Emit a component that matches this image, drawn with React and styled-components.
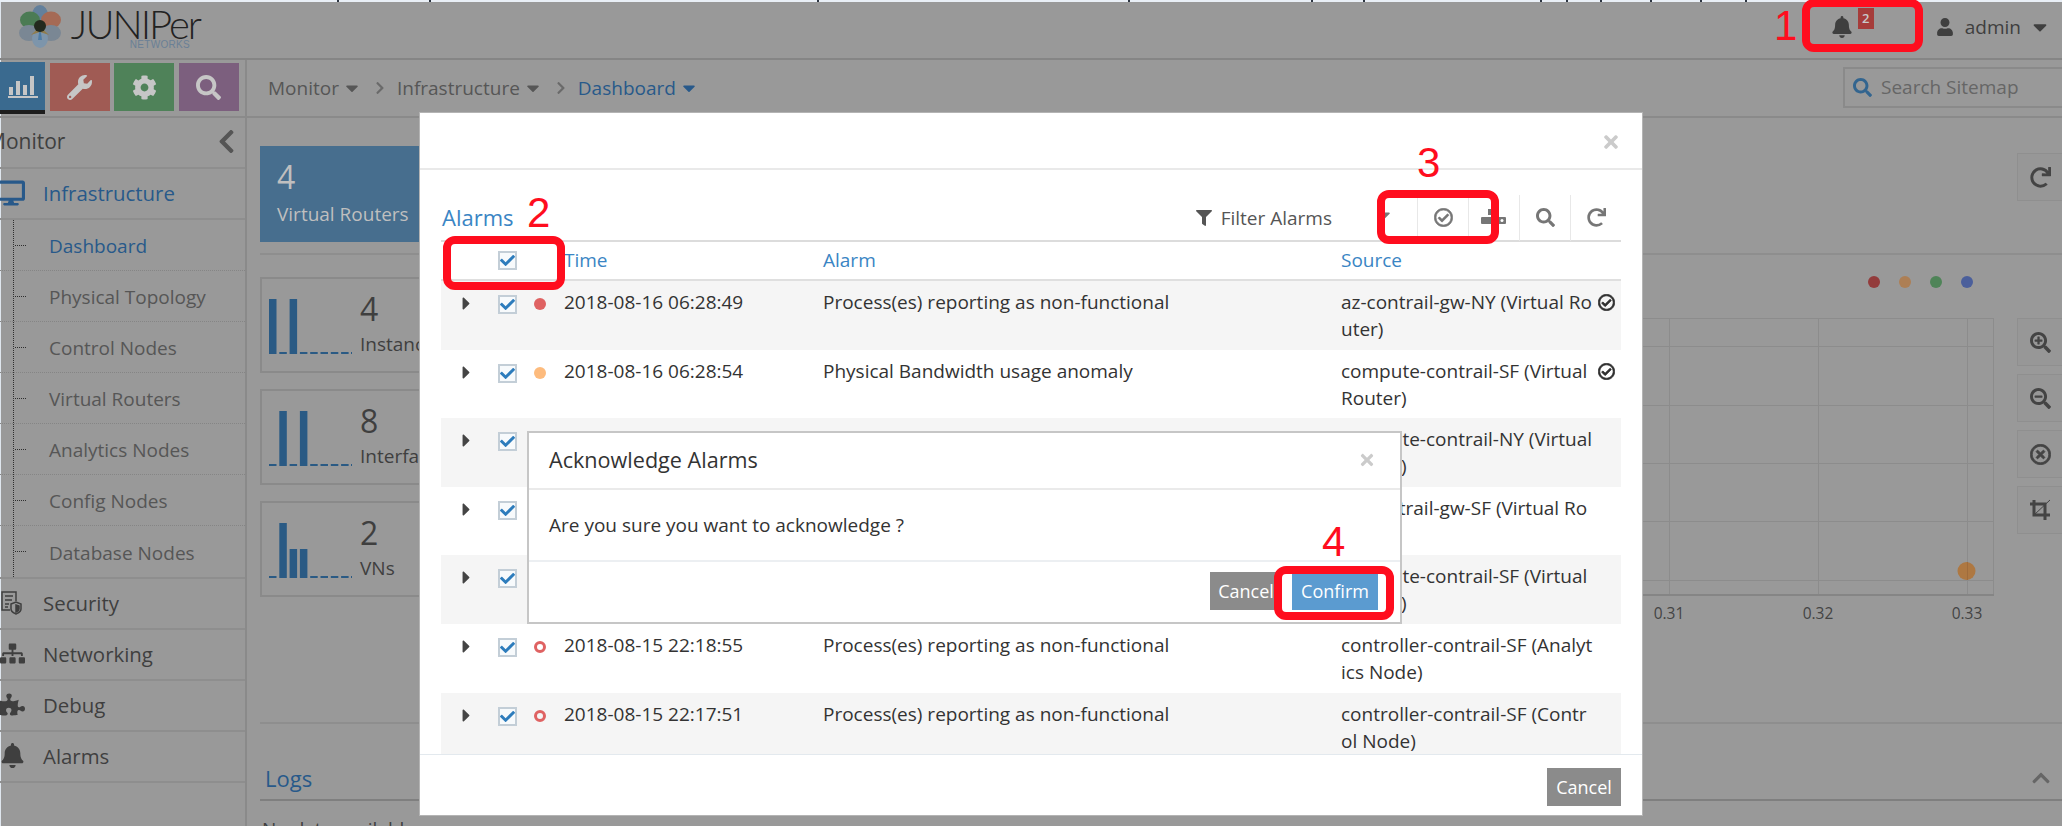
import React from 'react'
import styled, { createGlobalStyle } from 'styled-components'
import {
    FaBell,
    FaCaretDown,
    FaCaretRight,
    FaChevronLeft,
    FaChevronRight,
    FaChevronUp,
    FaCheck,
    FaCog,
    FaDesktop,
    FaFilter,
    FaPuzzlePiece,
    FaRedo,
    FaRegCheckCircle,
    FaRegTimesCircle,
    FaSearch,
    FaSearchMinus,
    FaSearchPlus,
    FaSitemap,
    FaTimes,
    FaUser,
    FaWrench
} from 'react-icons/fa'

// the page sits behind a modal backdrop, so these are the dimmed colours
const dimBg = '#999999'
const dimLine = '#8a8a8a'
const dimText = '#3f3f3f'
const dimMuted = '#565656'
const dimBlue = '#28598a'
const linkBlue = '#3a85c4'
const annotation = '#ff0d1e'

const GlobalStyle = createGlobalStyle`
    html, body {
        margin: 0;
        height: 826px;
        overflow: hidden;
        background: ${dimBg};
        font-family: "Open Sans", "Liberation Sans", sans-serif;
        font-size: 19px;
    }
    * { box-sizing: border-box; }
`

const Page = styled.div`
    position: relative;
    width: 2062px;
    height: 826px;
    overflow: hidden;
    color: ${dimText};
    box-shadow: inset 1px 0 #dfe6ee;
`

const TopStrip = styled.svg`
    display: block;
    width: 100%;
    height: 2px;
    background: #e9eff6;
`

const Header = styled.header`
    display: flex;
    align-items: center;
    justify-content: space-between;
    height: 58px;
    padding: 0 11px 6px 19px;
    border-bottom: 2px solid #858585;
`

const Logo = styled.div`
    display: flex;
    align-items: flex-start;
    gap: 11px;
`

const LogoWords = styled.div`
    display: flex;
    flex-direction: column;
    align-items: flex-end;
    width: 128px;
`

const LogoName = styled.span`
    font-family: Lato, "Open Sans", sans-serif;
    font-weight: 300;
    font-size: 40px;
    line-height: 40px;
    letter-spacing: -2px;
    color: #222;
`

const LogoSub = styled.span`
    font-family: "Liberation Sans", sans-serif;
    font-size: 10px;
    line-height: 10px;
    letter-spacing: 0.3px;
    margin: -4px 10px 0 0;
    color: #6a8096;
`

const UserBar = styled.div`
    display: flex;
    align-items: center;
`

const BellLink = styled.span`
    position: relative;
    display: flex;
    margin-right: 83px;
    font-size: 22px;
`

const BellBadge = styled.span`
    position: absolute;
    left: 27px;
    top: -8px;
    width: 16px;
    height: 21px;
    background: #a63c3a;
    color: #c9c9c9;
    font-size: 13px;
    font-weight: 600;
    line-height: 21px;
    text-align: center;
`

const UserName = styled.span`
    margin: 0 8px 0 11px;
`

const Body = styled.div`
    display: flex;
    height: 766px;
`

const Sidebar = styled.aside`
    flex: 0 0 247px;
    overflow: hidden;
    border-right: 2px solid ${dimLine};
`

const TabRow = styled.div`
    display: flex;
    gap: 4.5px;
    height: 58px;
    padding-top: 3px;
    border-bottom: 2px solid ${dimLine};
`

const Tab = styled.div`
    display: flex;
    align-items: center;
    justify-content: center;
    flex: 0 0 ${(p) => (p.$active ? '45px' : '60px')};
    height: ${(p) => (p.$active ? '52px' : '48px')};
    margin-top: ${(p) => (p.$active ? '-1px' : '0')};
    background: ${(p) => p.$color};
    border-bottom: ${(p) => (p.$active ? '4px solid #1d1d1d' : '0')};
    color: #c6c6c6;
    font-size: 25px;
`

const SideTitle = styled.div`
    display: flex;
    align-items: center;
    justify-content: space-between;
    height: 51px;
    padding: 0 5px 3px 0;
    border-bottom: 2px solid #8e8e8e;
    font-size: 21px;
    color: ${dimText};
`

const SideTitleText = styled.span`
    margin-left: -13px;
`

const SideChevron = styled.span`
    display: flex;
    color: #555;
    font-size: 27px;
`

const SideRow = styled.div`
    display: flex;
    align-items: center;
    height: 51px;
    padding-bottom: 2px;
    border-bottom: 2px solid #8e8e8e;
    font-size: 20.4px;
    color: ${(p) => (p.$active ? dimBlue : dimText)};
`

const SideIcon = styled.span`
    display: flex;
    flex: 0 0 ${(p) => 43 - (p.$shift || 0)}px;
    font-size: ${(p) => p.$size || 25}px;
    margin-left: ${(p) => p.$shift || 0}px;
`

const SubList = styled.div`
    position: relative;
    border-bottom: 2px solid #8e8e8e;

    &::before {
        content: '';
        position: absolute;
        left: 13px;
        top: 0;
        bottom: 0;
        border-left: 1px dotted #2e2e2e;
    }
`

const SubRow = styled.div`
    position: relative;
    display: flex;
    align-items: center;
    height: 51px;
    padding: 2px 0 0 49px;
    border-bottom: ${(p) => (p.$last ? '0' : '1px dotted #858585')};
    color: ${(p) => (p.$active ? dimBlue : dimMuted)};

    &::before {
        content: '';
        position: absolute;
        left: 15px;
        top: 25px;
        width: 11px;
        border-top: 1px dotted #2e2e2e;
    }
`

const Main = styled.main`
    flex: 1;
    min-width: 0;
`

const SubNav = styled.nav`
    display: flex;
    align-items: center;
    justify-content: space-between;
    height: 58px;
    padding-left: 21px;
    border-bottom: 2px solid ${dimLine};
    color: ${dimMuted};
`

const Crumbs = styled.div`
    display: flex;
    align-items: center;
`

const Crumb = styled.span`
    display: flex;
    align-items: center;
    gap: 3px;
    color: ${(p) => (p.$active ? dimBlue : dimMuted)};
`

const CrumbSep = styled.span`
    display: flex;
    margin: 0 10px 0 11px;
    font-size: 14px;
    color: #6a6a6a;
`

const SearchBox = styled.div`
    display: flex;
    align-items: center;
    gap: 9px;
    width: 219px;
    height: 41px;
    margin-top: -2px;
    padding-left: 8px;
    border: 2px solid ${dimLine};
    border-right: 0;
    color: #666;
`

const SearchIcon = styled.span`
    display: flex;
    color: #33658f;
`

const Content = styled.div`
    padding: 28px 0 0 13px;
`

const SummaryRow = styled.div`
    display: flex;
    justify-content: space-between;
    height: 109px;
    border-bottom: 2px solid #8e8e8e;
`

const HeroCard = styled.div`
    width: 260px;
    height: 96px;
    padding: 9px 17px;
    background: #476e8e;
    color: #bfbfbf;
`

const HeroValue = styled.div`
    font-size: 32px;
    line-height: 44px;
`

const HeroLabel = styled.div`
    line-height: 30px;
`

const ToolButton = styled.div`
    display: flex;
    align-items: center;
    justify-content: center;
    width: 45px;
    height: 48px;
    margin-top: ${(p) => p.$top || 0}px;
    border: 1px solid #8f8f8f;
    border-right: 0;
    background: #979797;
    font-size: 21px;
    color: #444;
`

const DashRow = styled.div`
    display: flex;
    height: 469px;
    padding-top: 22px;
    border-bottom: 2px solid #8e8e8e;
`

const StatColumn = styled.div`
    display: flex;
    flex-direction: column;
    gap: 16px;
    flex: 0 0 320px;
`

const StatCard = styled.div`
    display: flex;
    height: 96px;
    border: 2px solid ${dimLine};
    padding: 19px 0 0 7px;
`

const StatText = styled.div`
    margin-left: 1px;
`

const StatValue = styled.div`
    font-size: 32px;
    line-height: 36px;
    margin-top: -7px;
`

const StatLabel = styled.div`
    line-height: 30px;
    margin-top: 2px;
`

const ChartColumn = styled.div`
    flex: 1;
    min-width: 0;
`

const Legend = styled.div`
    display: flex;
    justify-content: flex-end;
    gap: 19px;
    padding: 0 21px 30px 0;
    margin-top: -1px;
`

const LegendDot = styled.span`
    width: 12px;
    height: 12px;
    border-radius: 50%;
    background: ${(p) => p.$color};
`

const ChartSvg = styled.svg`
    display: block;
    margin-left: auto;
`

const ChartLabel = styled.text`
    font-family: "Open Sans", sans-serif;
    font-size: 15.5px;
    fill: #444;
    text-anchor: middle;
`

const ToolColumn = styled.div`
    display: flex;
    flex-direction: column;
    gap: 8px;
    flex: 0 0 45px;
    margin: 41px 0 0 23px;
`

const LogsHeader = styled.div`
    display: flex;
    align-items: center;
    justify-content: space-between;
    height: 77px;
    padding: 33px 11px 0 5px;
    border-bottom: 2px solid #7f7f7f;
`

const LogsTitle = styled.span`
    font-size: 22px;
    color: ${dimBlue};
`

const LogsChevron = styled.span`
    display: flex;
    font-size: 20px;
    color: #666;
`

const NoData = styled.div`
    margin: 15px 0 0 2px;
`

const Modal = styled.section`
    position: absolute;
    left: 419px;
    top: 112px;
    width: 1224px;
    height: 704px;
    display: flex;
    flex-direction: column;
    background: #fff;
    border: 1px solid #b4b4b4;
    color: #333;
`

const ModalHeader = styled.div`
    display: flex;
    align-items: center;
    justify-content: flex-end;
    flex: 0 0 57px;
    padding: 2px 21px 0 0;
    border-bottom: 2px solid #e9e9e9;
`

const CloseIcon = styled.span`
    display: flex;
    font-size: ${(p) => p.$size || 20}px;
    color: #cbcbcb;
`

const ModalBody = styled.div`
    flex: 1;
    min-height: 0;
    overflow: hidden;
    padding: 20px 21px 0;
`

const Toolbar = styled.div`
    display: flex;
    align-items: center;
    height: 52px;
    padding-top: 5px;
    border-bottom: 2px solid #dcdcdc;
`

const ToolbarTitle = styled.span`
    flex: 1;
    margin: -2px 0 0 1px;
    font-size: 22px;
    color: ${linkBlue};
`

const FilterLabel = styled.span`
    display: flex;
    align-items: center;
    gap: 9px;
    margin-right: 34px;
    color: #555;
    font-size: 19px;
`

const ToolbarButton = styled.span`
    display: flex;
    align-items: center;
    justify-content: center;
    width: 51px;
    height: 46px;
    padding: ${(p) => (p.$bare ? '0 16px 6px 0' : '0')};
    border-left: ${(p) => (p.$bare ? '0' : '1px solid #e8e8e8')};
    color: #767676;
    font-size: 19px;

    svg {
        stroke: currentColor;
        stroke-width: ${(p) => (p.$heavy ? 18 : 0)};
    }
`

const GridRow = styled.div`
    display: grid;
    grid-template-columns: 57px 36px 30px 259px 518px 280px;
    height: ${(p) => (p.$head ? '39px' : '68.6px')};
    align-items: ${(p) => (p.$head ? 'center' : 'start')};
    padding-top: ${(p) => (p.$head ? '0' : '8px')};
    line-height: 27px;
    font-size: 19px;
    background: ${(p) => (p.$alt ? '#f5f5f5' : '#fff')};
    border-bottom: ${(p) => (p.$head ? '2px solid #dfdfdf' : '0')};
`

const HeadCell = styled.span`
    color: ${linkBlue};
`

const CaretCell = styled.span`
    display: flex;
    padding: 4px 0 0 15px;
    font-size: 21px;
    color: #444;
`

const Check = styled.span`
    display: flex;
    align-items: center;
    justify-content: center;
    width: 19px;
    height: 19px;
    margin-top: ${(p) => (p.$head ? '0' : '6px')};
    background: #f7fafc;
    border: 2px solid #c3ced7;
    color: #2d7cbc;
    font-size: 15px;
`

const Severity = styled.span`
    display: block;
    width: 12px;
    height: 12px;
    margin-top: 9px;
    border-radius: 50%;
    background: ${(p) => (p.$hollow ? 'transparent' : p.$color)};
    border: ${(p) => (p.$hollow ? `3px solid ${p.$color}` : '0')};
`

const SourceCell = styled.div`
    display: flex;
    gap: 3px;
`

const SourceText = styled.span`
    flex: 0 0 254px;
    word-break: break-all;
`

const AckIcon = styled.span`
    display: flex;
    padding-top: 5px;
    font-size: 17px;
    color: #2f2f2f;

    svg {
        stroke: currentColor;
        stroke-width: 22;
    }
`

const ModalFooter = styled.div`
    display: flex;
    justify-content: flex-end;
    flex: 0 0 61px;
    padding: 13px 21px 0 0;
    border-top: 1px solid #e3e9ee;
`

const GreyButton = styled.span`
    display: flex;
    align-items: center;
    justify-content: center;
    width: ${(p) => p.$width}px;
    height: 38px;
    background: #8b8b8b;
    color: #fff;
    font-size: 18px;
`

const Dialog = styled.section`
    position: absolute;
    left: 527px;
    top: 431px;
    width: 875px;
    height: 193px;
    display: flex;
    flex-direction: column;
    background: #fff;
    border: 2px solid #c6c6c6;
    color: #333;
`

const DialogHeader = styled.div`
    display: flex;
    align-items: center;
    justify-content: space-between;
    flex: 0 0 57px;
    padding: 0 24px 2px 20px;
    border-bottom: 2px solid #eaeaea;
    font-size: 21.6px;
`

const DialogBody = styled.div`
    display: flex;
    align-items: center;
    flex: 0 0 72px;
    padding-left: 20px;
    border-bottom: 2px solid #eceff2;
`

const DialogFooter = styled.div`
    display: flex;
    justify-content: flex-end;
    gap: 10px;
    padding: 10px 22px 0 0;
`

const ConfirmButton = styled(GreyButton)`
    background: #5b9bd0;
`

const ZoomIcon = styled.span`
    display: flex;

    svg {
        stroke: currentColor;
        stroke-width: 20;
    }
`

const Callout = styled.div`
    position: absolute;
    left: ${(p) => p.$x}px;
    top: ${(p) => p.$y}px;
    width: ${(p) => p.$w}px;
    height: ${(p) => p.$h}px;
    border: 8px solid ${annotation};
    border-radius: 12px;
`

const CalloutNumber = styled.span`
    position: absolute;
    left: ${(p) => p.$x}px;
    top: ${(p) => p.$y}px;
    font-family: "Liberation Sans", Arial, sans-serif;
    font-size: 42px;
    line-height: 48px;
    color: ${annotation};
`

const subItems = ['Dashboard', 'Physical Topology', 'Control Nodes', 'Virtual Routers', 'Analytics Nodes', 'Config Nodes', 'Database Nodes']

const stats = [
    { value: 4, label: 'Instances', bars: [55, 2, 55, 2, 2, 2, 2, 2] },
    { value: 8, label: 'Interfaces', bars: [2, 55, 2, 55, 2, 2, 2, 2] },
    { value: 2, label: 'VNs', bars: [2, 55, 29, 29, 2, 2, 2, 2] }
]

const rows = [
    { time: '2018-08-16 06:28:49', alarm: 'Process(es) reporting as non-functional', source: 'az-contrail-gw-NY (Virtual Router)', color: '#df6262', ack: true },
    { time: '2018-08-16 06:28:54', alarm: 'Physical Bandwidth usage anomaly', source: 'compute-contrail-SF (Virtual Router)', color: '#fdbb7d', ack: true },
    { time: '2018-08-16 06:28:54', alarm: 'Physical Bandwidth usage anomaly', source: 'compute-contrail-NY (Virtual Router)', color: '#fdbb7d' },
    { time: '2018-08-16 06:28:49', alarm: 'Process(es) reporting as non-functional', source: 'az-contrail-gw-SF (Virtual Router)', color: '#df6262' },
    { time: '2018-08-15 22:19:02', alarm: 'Process(es) reporting as non-functional', source: 'compute-contrail-SF (Virtual Router)', color: '#df6262' },
    { time: '2018-08-15 22:18:55', alarm: 'Process(es) reporting as non-functional', source: 'controller-contrail-SF (Analytics Node)', color: '#df6262', hollow: true },
    { time: '2018-08-15 22:17:51', alarm: 'Process(es) reporting as non-functional', source: 'controller-contrail-SF (Control Node)', color: '#df6262', hollow: true }
]

const BarsIcon = () => (
    <svg width="30" height="24" viewBox="0 0 30 24" fill="currentColor">
        <rect x="1" y="13" width="4" height="8" />
        <rect x="8" y="7" width="4" height="14" />
        <rect x="15" y="11" width="4" height="10" />
        <rect x="22" y="2" width="4" height="19" />
        <rect x="0" y="22" width="30" height="2" />
    </svg>
)

const SecurityIcon = () => (
    <svg width="22" height="24" viewBox="0 0 22 24" fill="none" stroke="currentColor" strokeWidth="1.5">
        <path d="M10 19H2V1h14v9" />
        <path d="M5 5h8M5 9h7M5 13h4M5 16h3" />
        <path d="M11 13l5-2 5 2v5c0 3-3 4-5 5-2-1-5-2-5-5z" />
        <path d="M16 14l3 1v3c0 2-2 2.500-3 3z" fill="currentColor" />
    </svg>
)

const CropIcon = () => (
    <svg width="22" height="22" viewBox="0 0 22 22" fill="none" stroke="currentColor">
        <path d="M1 5h15v16M5 1v15h16" strokeWidth="3" />
        <path d="M5 16L21 1" strokeWidth="1" />
    </svg>
)

const FlowerLogo = () => (
    <svg width="42" height="44" viewBox="0 0 42 44">
        <ellipse cx="21" cy="11" rx="8" ry="10" fill="#63809c" />
        <ellipse cx="11" cy="16" rx="10" ry="8.500" fill="#4b7b54" />
        <ellipse cx="32" cy="16" rx="10" ry="8.500" fill="#a56a55" />
        <ellipse cx="10" cy="29" rx="10" ry="8" fill="#7a8794" />
        <ellipse cx="32" cy="29" rx="10" ry="8" fill="#7a8794" />
        <ellipse cx="21" cy="34" rx="8" ry="10" fill="#7d95ab" />
        <path d="M12 31l9-9 9 9-9-3z" fill="#8f7c4e" />
        <path d="M21 22l-2 14h4z" fill="#4f7da6" />
        <circle cx="21" cy="22" r="6" fill="#242a1e" />
    </svg>
)

const HiddenToolIcon = () => (
    <svg width="26" height="22" viewBox="0 0 26 22" fill="currentColor">
        <rect x="7" y="2" width="9" height="6" />
        <rect x="0" y="10" width="25" height="7" rx="1" />
        <circle cx="21" cy="13.500" r="1.500" fill="#fff" />
    </svg>
)

const Sparkline = ({ bars }) => (
    <svg width="90" height="56" viewBox="0 0 90 56" fill="#2a5a84">
        {bars.map((h, i) => (
            <rect key={i} x={i * 10.3} y={56 - h} width="7.500" height={h} />
        ))}
        <rect x="82" y="54" width="1" height="2" />
    </svg>
)

const Chart = () => (
    <ChartSvg width="400" height="310" viewBox="0 0 400 310">
        <g stroke="#8c8c8c" strokeWidth="1">
            {[0.5, 28.5, 87.5, 145.5, 203.5, 262.5].map((y) => (
                <line key={y} x1="0" x2="400" y1={y} y2={y} />
            ))}
            {[75.5, 224.5, 373.5, 399.5].map((x) => (
                <line key={x} x1={x} x2={x} y1="0" y2="277" />
            ))}
            <line x1="0" x2="400" y1="277" y2="277" stroke="#858585" strokeWidth="2" />
        </g>
        <circle cx="372.500" cy="253" r="9" fill="#ae7842" />
        <line x1="373.500" x2="373.500" y1="244" y2="262" stroke="#9f6c3c" />
        <ChartLabel x="75" y="301">0.31</ChartLabel>
        <ChartLabel x="224" y="301">0.32</ChartLabel>
        <ChartLabel x="373" y="301">0.33</ChartLabel>
    </ChartSvg>
)

const App = () => (
    <Page>
        <GlobalStyle />
        <TopStrip viewBox="0 0 2062 2" preserveAspectRatio="none">
            {[337, 429, 817, 1128, 1311, 1363, 1540, 1566, 1600, 1650, 1700, 1745].map((x) => (
                <rect key={x} x={x} y="0" width="2" height="2" fill="#2c3440" />
            ))}
        </TopStrip>
        <Header>
            <Logo>
                <FlowerLogo />
                <LogoWords>
                    <LogoName>JUNIPer</LogoName>
                    <LogoSub>NETWORKS</LogoSub>
                </LogoWords>
            </Logo>
            <UserBar>
                <BellLink>
                    <FaBell />
                    <BellBadge>2</BellBadge>
                </BellLink>
                <FaUser size={18} />
                <UserName>admin</UserName>
                <FaCaretDown size={22} />
            </UserBar>
        </Header>
        <Body>
            <Sidebar>
                <TabRow>
                    <Tab $active $color="#3a6a8f"><BarsIcon /></Tab>
                    <Tab $color="#a05b54"><FaWrench /></Tab>
                    <Tab $color="#4f8259"><FaCog /></Tab>
                    <Tab $color="#7c5f7e"><FaSearch /></Tab>
                </TabRow>
                <SideTitle>
                    <SideTitleText>Monitor</SideTitleText>
                    <SideChevron><FaChevronLeft /></SideChevron>
                </SideTitle>
                <SideRow $active>
                    <SideIcon $size={28} $shift={-3}><FaDesktop /></SideIcon>
                    Infrastructure
                </SideRow>
                <SubList>
                    {subItems.map((item, i) => (
                        <SubRow key={item} $active={i === 0} $last={i === subItems.length - 1}>{item}</SubRow>
                    ))}
                </SubList>
                <SideRow>
                    <SideIcon><SecurityIcon /></SideIcon>
                    Security
                </SideRow>
                <SideRow>
                    <SideIcon><FaSitemap /></SideIcon>
                    Networking
                </SideRow>
                <SideRow>
                    <SideIcon><FaPuzzlePiece /></SideIcon>
                    Debug
                </SideRow>
                <SideRow>
                    <SideIcon><FaBell /></SideIcon>
                    Alarms
                </SideRow>
            </Sidebar>
            <Main>
                <SubNav>
                    <Crumbs>
                        <Crumb>Monitor <FaCaretDown size={20} /></Crumb>
                        <CrumbSep><FaChevronRight /></CrumbSep>
                        <Crumb>Infrastructure <FaCaretDown size={20} /></Crumb>
                        <CrumbSep><FaChevronRight /></CrumbSep>
                        <Crumb $active>Dashboard <FaCaretDown size={20} /></Crumb>
                    </Crumbs>
                    <SearchBox>
                        <SearchIcon><FaSearch size={19} /></SearchIcon>
                        Search Sitemap
                    </SearchBox>
                </SubNav>
                <Content>
                    <SummaryRow>
                        <HeroCard>
                            <HeroValue>4</HeroValue>
                            <HeroLabel>Virtual Routers</HeroLabel>
                        </HeroCard>
                        <ToolButton $top={7}><FaRedo /></ToolButton>
                    </SummaryRow>
                    <DashRow>
                        <StatColumn>
                            {stats.map((stat) => (
                                <StatCard key={stat.label}>
                                    <Sparkline bars={stat.bars} />
                                    <StatText>
                                        <StatValue>{stat.value}</StatValue>
                                        <StatLabel>{stat.label}</StatLabel>
                                    </StatText>
                                </StatCard>
                            ))}
                        </StatColumn>
                        <ChartColumn>
                            <Legend>
                                <LegendDot $color="#933c3c" />
                                <LegendDot $color="#ad7f55" />
                                <LegendDot $color="#4f8458" />
                                <LegendDot $color="#4b5f9b" />
                            </Legend>
                            <Chart />
                        </ChartColumn>
                        <ToolColumn>
                            <ToolButton><FaSearchPlus /></ToolButton>
                            <ToolButton><FaSearchMinus /></ToolButton>
                            <ToolButton><ZoomIcon><FaRegTimesCircle /></ZoomIcon></ToolButton>
                            <ToolButton><CropIcon /></ToolButton>
                        </ToolColumn>
                    </DashRow>
                    <LogsHeader>
                        <LogsTitle>Logs</LogsTitle>
                        <LogsChevron><FaChevronUp /></LogsChevron>
                    </LogsHeader>
                    <NoData>No data available</NoData>
                </Content>
            </Main>
        </Body>

        <Modal>
            <ModalHeader>
                <CloseIcon><FaTimes /></CloseIcon>
            </ModalHeader>
            <ModalBody>
                <Toolbar>
                    <ToolbarTitle>Alarms</ToolbarTitle>
                    <FilterLabel><FaFilter size={16} /> Filter Alarms</FilterLabel>
                    <ToolbarButton $bare><FaCaretDown size={20} /></ToolbarButton>
                    <ToolbarButton $heavy><FaRegCheckCircle /></ToolbarButton>
                    <ToolbarButton><HiddenToolIcon /></ToolbarButton>
                    <ToolbarButton><FaSearch /></ToolbarButton>
                    <ToolbarButton><FaRedo /></ToolbarButton>
                </Toolbar>
                <GridRow $head>
                    <span />
                    <Check $head><FaCheck /></Check>
                    <span />
                    <HeadCell>Time</HeadCell>
                    <HeadCell>Alarm</HeadCell>
                    <HeadCell>Source</HeadCell>
                </GridRow>
                {rows.map((row, i) => (
                    <GridRow key={row.source + i} $alt={i % 2 === 0}>
                        <CaretCell><FaCaretRight /></CaretCell>
                        <Check><FaCheck /></Check>
                        <Severity $color={row.color} $hollow={row.hollow} />
                        <span>{row.time}</span>
                        <span>{row.alarm}</span>
                        <SourceCell>
                            <SourceText>{row.source}</SourceText>
                            {row.ack && <AckIcon><FaRegCheckCircle /></AckIcon>}
                        </SourceCell>
                    </GridRow>
                ))}
            </ModalBody>
            <ModalFooter>
                <GreyButton $width={74}>Cancel</GreyButton>
            </ModalFooter>
        </Modal>

        <Dialog>
            <DialogHeader>
                Acknowledge Alarms
                <CloseIcon $size={18}><FaTimes /></CloseIcon>
            </DialogHeader>
            <DialogBody>Are you sure you want to acknowledge ?</DialogBody>
            <DialogFooter>
                <GreyButton $width={72}>Cancel</GreyButton>
                <ConfirmButton $width={86}>Confirm</ConfirmButton>
            </DialogFooter>
        </Dialog>

        <Callout $x={1802} $y={-1} $w={121} $h={53} />
        <Callout $x={443} $y={236} $w={122} $h={54} />
        <Callout $x={1377} $y={190} $w={122} $h={54} />
        <Callout $x={1274} $y={566} $w={120} $h={54} />
        <CalloutNumber $x={1774} $y={2}>1</CalloutNumber>
        <CalloutNumber $x={527} $y={189}>2</CalloutNumber>
        <CalloutNumber $x={1417} $y={139}>3</CalloutNumber>
        <CalloutNumber $x={1322} $y={518}>4</CalloutNumber>
    </Page>
)

export default App
